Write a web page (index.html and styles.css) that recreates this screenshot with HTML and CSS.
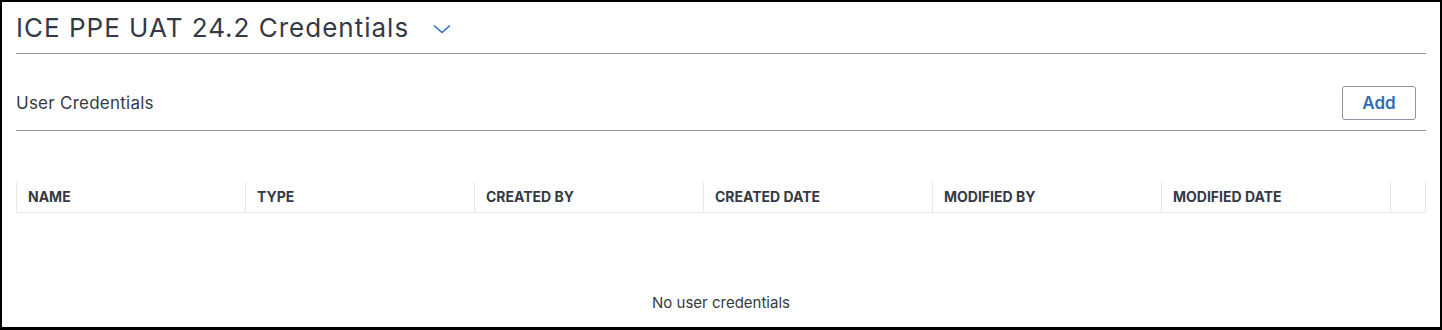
FILE: index.html
```html
<!DOCTYPE html>
<html lang="en">
<head>
    <meta charset="UTF-8">
    <title>ICE PPE UAT 24.2 Credentials</title>
    <link rel="stylesheet" href="styles.css">
</head>
<body>
<div class="page">
    <!-- Page title -->
    <div class="title-bar">
        <h1>ICE PPE UAT 24.2 Credentials</h1>
        <svg class="chevron" width="18" height="10" viewBox="0 0 18 10">
            <polyline points="1,1.5 9,8.5 17,1.5" fill="none" stroke="#2f6fb6" stroke-width="1.6"/>
        </svg>
    </div>

    <!-- Section header -->
    <div class="section-head">
        <h2>User Credentials</h2>
        <button class="btn-add">Add</button>
    </div>

    <!-- Credentials table -->
    <table class="grid">
        <thead>
        <tr>
            <th>Name</th>
            <th>Type</th>
            <th>Created By</th>
            <th>Created Date</th>
            <th>Modified By</th>
            <th>Modified Date</th>
            <th class="col-actions"></th>
        </tr>
        </thead>
    </table>
    <div class="empty">No user credentials</div>
</div>
</body>
</html>
```

FILE: styles.css
```css
html, body {
    margin: 0;
    padding: 0;
    background: #000;
}

.page {
    box-sizing: border-box;
    width: 1438px;
    height: 325px;
    margin: 2px 2px 0 2px;
    padding: 0 14px;
    background: #fff;
    font-family: "Inter", "Lato", sans-serif;
    color: #333a45;
    overflow: hidden;
}

/* Title */
.title-bar {
    display: flex;
    align-items: center;
    height: 51px;
    border-bottom: 1px solid #8c94a6;
}

.title-bar h1 {
    margin: 0;
    font-size: 26px;
    font-weight: 400;
    letter-spacing: 1px;
}

.chevron {
    margin-left: 24px;
    margin-top: 3px;
}

/* Section header */
.section-head {
    display: flex;
    align-items: center;
    justify-content: space-between;
    height: 77px;
    padding-top: 21px;
    box-sizing: border-box;
    border-bottom: 1px solid #8c94a6;
}

.section-head h2 {
    margin: 0;
    font-size: 17px;
    font-weight: 400;
    letter-spacing: 0.25px;
}

.btn-add {
    width: 74px;
    height: 34px;
    margin-right: 10px;
    border: 1px solid #8c94a6;
    border-radius: 3px;
    background: #fff;
    color: #2f6fb6;
    font-family: inherit;
    font-size: 17px;
    font-weight: 600;
    cursor: pointer;
}

/* Table */
.grid {
    width: 100%;
    margin-top: 51px;
    border-collapse: collapse;
    table-layout: fixed;
}

.grid th {
    width: 229px;
    height: 30px;
    padding: 0 11px;
    box-sizing: border-box;
    text-align: left;
    font-size: 14px;
    font-weight: 700;
    text-transform: uppercase;
    color: #333a45;
    border-left: 1px solid #e6e8ee;
    border-bottom: 1px solid #e6e8ee;
}

.grid th.col-actions {
    width: auto;
    border-right: 1px solid #e6e8ee;
}

.empty {
    margin-top: 80px;
    text-align: center;
    font-size: 15px;
}
```
